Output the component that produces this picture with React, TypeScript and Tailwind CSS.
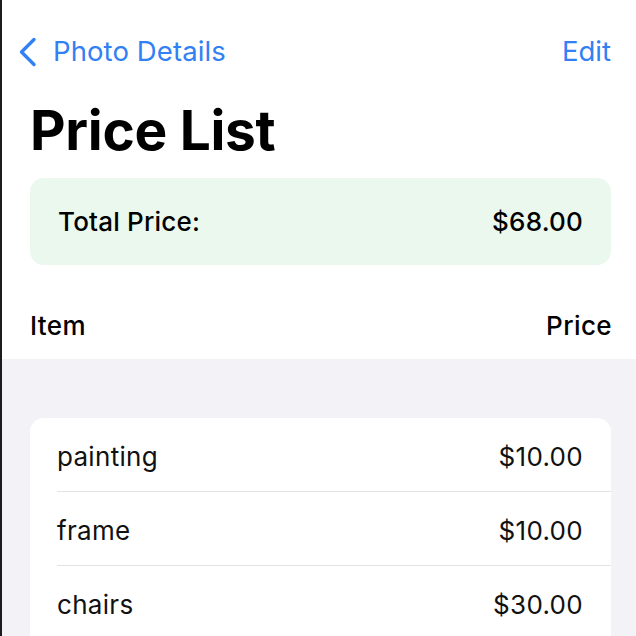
const items = [
  { name: "painting", price: "$10.00" },
  { name: "frame", price: "$10.00" },
  { name: "chairs", price: "$30.00" },
];

export default function App() {
  return (
    <div
      className="h-[636px] w-[636px] overflow-hidden border-l-2 border-[#1c1c1e] bg-white text-black"
      style={{ fontFamily: "Inter, 'Noto Sans', sans-serif" }}
    >
      {/* nav bar */}
      <div className="flex h-[100px] items-start justify-between pl-[15px] pr-[25px] pt-[37px]">
        <div className="flex h-[30px] items-center gap-[15px] text-[#3180f4]">
          <svg width="21" height="30" viewBox="0 0 21 30" fill="none">
            <path d="M17 2.5 L4.5 15 L17 27.5" stroke="currentColor" strokeWidth="3.4" strokeLinecap="round" strokeLinejoin="round" />
          </svg>
          <span className="text-[27.5px] leading-none tracking-[0.1px]">Photo Details</span>
        </div>
        <span className="flex h-[30px] items-center text-[27.5px] leading-none text-[#3180f4]">Edit</span>
      </div>

      <div className="pl-[28px] pr-[25px]">
        <h1 className="h-[60px] text-[55px] font-bold leading-[60px] tracking-[-0.3px]">Price List</h1>

        <div className="mt-[18px] flex h-[87px] items-center justify-between rounded-[14px] bg-[#eaf8ee] px-[28px] text-[26px] font-medium tracking-[0.2px]">
          <span>Total Price:</span>
          <span>$68.00</span>
        </div>

        <div className="flex h-[94px] items-center justify-between pt-[26px] text-[26px] font-medium tracking-[0.4px]">
          <span>Item</span>
          <span className="-mr-[1px]">Price</span>
        </div>
      </div>

      <div className="h-full bg-[#f2f2f7] pl-[28px] pr-[25px] pt-[59px]">
        <div className="rounded-t-[14px] bg-white">
          {items.map((it, i) => (
            <div key={it.name} className="pl-[27px]">
              <div
                className={
                  "flex h-[74px] items-center justify-between pr-[28px] pt-[3px] text-[26px] tracking-[0.3px] text-[#111]" +
                  (i < items.length - 1 ? " border-b border-[#e3e3e6]" : "")
                }
              >
                <span>{it.name}</span>
                <span>{it.price}</span>
              </div>
            </div>
          ))}
        </div>
      </div>
    </div>
  );
}
